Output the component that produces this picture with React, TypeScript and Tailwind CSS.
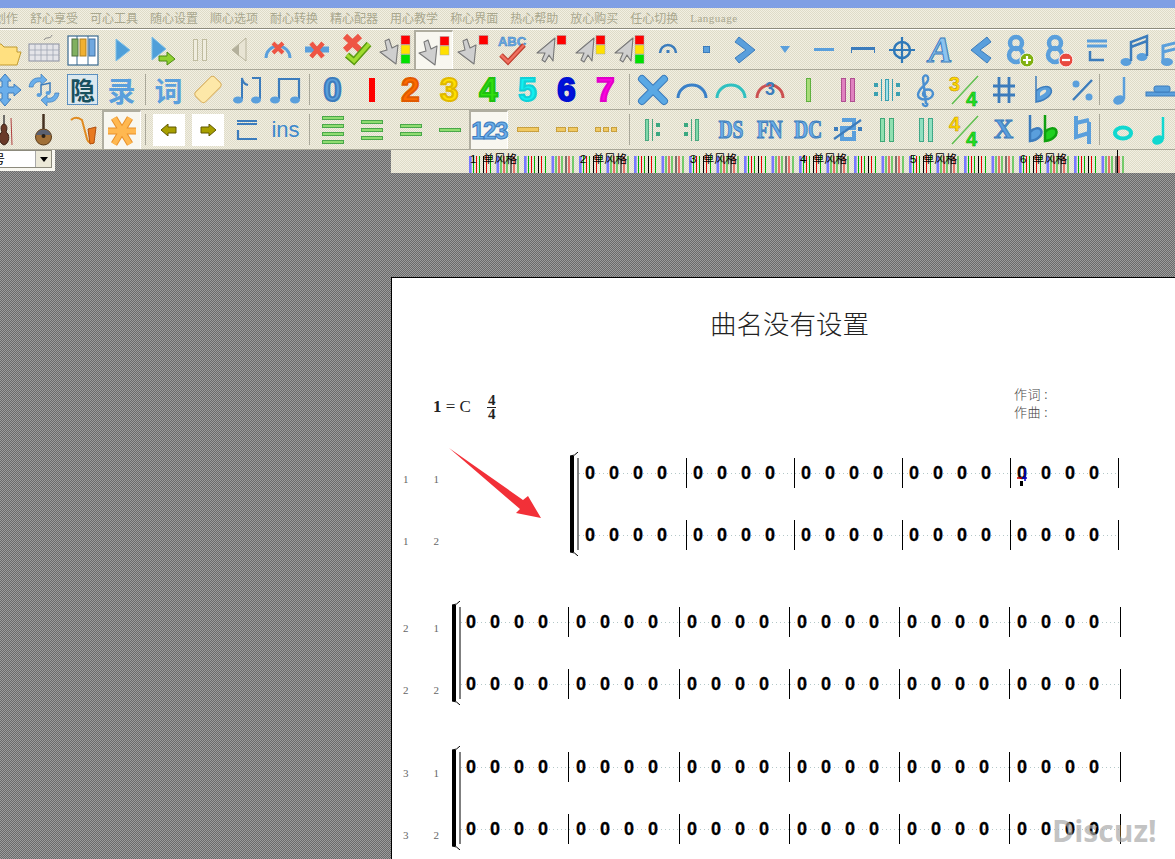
import React from "react";

const BLUE = "#5a9fdc";
const EDGE = "#3c7cbc";

type Item = { icon: React.ReactNode; selected?: boolean } | "sep" | "sepNarrow";

// 36x36 drawing box shared by every toolbar icon
function Ico({ children }: { children: React.ReactNode }) {
  return (
    <svg width="36" height="36" viewBox="0 0 36 36" className="shrink-0">
      {children}
    </svg>
  );
}

function Label({ className, children }: { className: string; children: React.ReactNode }) {
  return <span className={`leading-none whitespace-nowrap ${className}`}>{children}</span>;
}

function Digit({ color, edge, n }: { color: string; edge: string; n: string }) {
  return (
    <span
      className="font-['Liberation_Sans',sans-serif] font-bold text-[33px] leading-none [-webkit-text-stroke:2px_var(--e)]"
      style={{ color, "--e": edge } as React.CSSProperties}
    >
      {n}
    </span>
  );
}

function Cursor({ lights, ne }: { lights: number; ne?: boolean }) {
  const colors = ["#ff0000", "#ffe000", "#00e000"].slice(0, lights);
  return (
    <Ico>
      {ne ? (
        <path d="M22 6 L20 29 L16 23 L12 30 L9 28 L12 21 L4 21 Z" fill="#cfcfcf" stroke="#777" strokeWidth="1.1" strokeLinejoin="round" />
      ) : (
        <path d="M8 9 L12 7 L15 16 L21 13 L19 32 L3 20 L10 18 Z" fill="#cfcfcf" stroke="#777" strokeWidth="1.1" strokeLinejoin="round" />
      )}
      {colors.map((c, i) => (
        <rect key={c} x="24" y={3.5 + i * 9.5} width="9" height="9" fill={c} stroke="#aaa" strokeWidth="0.5" />
      ))}
    </Ico>
  );
}

function GreenBars({ n }: { n: number }) {
  return (
    <div className="flex flex-col gap-[4px]">
      {Array.from({ length: n }).map((_, i) => (
        <div key={i} className="w-[22px] h-[4px] bg-[#8fdc70] border border-[#4aa84a]" />
      ))}
    </div>
  );
}

function YellowDash({ n }: { n: number }) {
  return (
    <div className="flex gap-[2px]">
      {Array.from({ length: n }).map((_, i) => (
        <div key={i} className={`h-[5px] bg-[#f0c860] border border-[#c8a040] ${n === 1 ? "w-[22px]" : n === 2 ? "w-[10px]" : "w-[6px]"}`} />
      ))}
    </div>
  );
}

function Frac({ top, topColor }: { top: string; topColor: string }) {
  return (
    <Ico>
      <line x1="5" y1="32" x2="31" y2="4" stroke="#60c050" strokeWidth="1.5" />
      <text x="2" y="19" fontFamily="Liberation Sans" fontWeight="700" fontSize="20" fill={topColor} stroke="#c09000" strokeWidth="0.5">
        {top}
      </text>
      <text x="19" y="34" fontFamily="Liberation Sans" fontWeight="700" fontSize="20" fill="#20e020" stroke="#10a010" strokeWidth="0.5">
        4
      </text>
    </Ico>
  );
}

function Eight({ badge, mark }: { badge: string; mark: string }) {
  return (
    <Ico>
      <circle cx="15" cy="11" r="6" fill="none" stroke={BLUE} strokeWidth="4.5" />
      <circle cx="15" cy="23" r="7" fill="none" stroke={BLUE} strokeWidth="4.5" />
      <circle cx="26" cy="28" r="7" fill={badge} stroke="#fff" strokeWidth="1" />
      <path d={mark} stroke="#fff" strokeWidth="2.2" />
    </Ico>
  );
}

function Note({ color = BLUE }: { color?: string }) {
  return (
    <Ico>
      <ellipse cx="14" cy="28" rx="6" ry="4.5" fill={color} transform="rotate(-20 14 28)" />
      <path d="M19 27 V5" stroke={color} strokeWidth="2.5" />
    </Ico>
  );
}

function Bars({ color, edge, n }: { color: string; edge: string; n: number }) {
  return (
    <div className="flex gap-[4px]">
      {Array.from({ length: n }).map((_, i) => (
        <div key={i} className="w-[5px] h-[24px] border" style={{ backgroundColor: color, borderColor: edge }} />
      ))}
    </div>
  );
}

function Repeat({ flip }: { flip?: boolean }) {
  return (
    <div className={`flex items-center gap-[3px] ${flip ? "flex-row-reverse" : ""}`}>
      <div className="w-[4px] h-[22px] bg-[#7fd8a8] border border-[#4aa880]" />
      <div className="w-[1px] h-[22px] bg-[#4aa880]" />
      <div className="flex flex-col gap-[5px]">
        <div className="w-[4px] h-[4px] bg-[#3aa880]" />
        <div className="w-[4px] h-[4px] bg-[#3aa880]" />
      </div>
    </div>
  );
}

const serifBlue =
  "font-['Liberation_Serif',serif] font-bold text-[25px] scale-x-[0.78] text-[#6aaeea] [-webkit-text-stroke:1px_#3c7cbc]";
const cjkBlue = "font-['Noto_Sans_CJK_SC',sans-serif] text-[28px] font-bold text-[#5a9fdc]";

const row1: Item[] = [
  { icon: <Ico><path d="M4 12 H14 L17 15 H30 V20 H34 L30 33 H4 Z" fill="#ffe080" stroke="#c09a30" /></Ico> },
  {
    icon: (
      <Ico>
        <path d="M18 8 C20 4 24 8 26 3" fill="none" stroke="#888" />
        <rect x="3" y="12" width="30" height="17" fill="#e4e4e8" stroke="#8a8fa0" />
        <path d="M3 18 H33 M3 23 H33 M9 12 V29 M15 12 V29 M21 12 V29 M27 12 V29" stroke="#a0a4b4" strokeWidth="0.8" />
      </Ico>
    ),
  },
  {
    icon: (
      <Ico>
        <rect x="3" y="4" width="30" height="29" fill="#fff" stroke="#3a6a90" strokeWidth="1.2" />
        <path d="M12 4 V33 M23 4 V33" stroke="#3a6a90" />
        <rect x="7" y="7" width="6" height="17" fill="#80b060" stroke="#507040" />
        <rect x="15" y="7" width="6" height="17" fill="#f0b030" stroke="#b08020" />
        <rect x="24" y="7" width="6" height="17" fill="#70a8e0" stroke="#4070a0" />
      </Ico>
    ),
  },
  { icon: <Ico><path d="M12 7 L26 18 L12 29 Z" fill="#4f9fd9" stroke="#7fc0e8" /></Ico> },
  {
    icon: (
      <Ico>
        <path d="M9 5 L23 17 L9 28 Z" fill="#4f9fd9" stroke="#7fc0e8" />
        <path d="M16 24 H24 V20 L32 27 L24 33 V29 H16 Z" fill="#8fd030" stroke="#4c8a10" />
      </Ico>
    ),
  },
  { icon: <div className="flex gap-[4px]"><div className="w-[5px] h-[22px] border border-[#c0bca0] bg-[#f0eddf]" /><div className="w-[5px] h-[22px] border border-[#c0bca0] bg-[#f0eddf]" /></div> },
  { icon: <Ico><path d="M25 6 V29 L11 18 Z" fill="#e8e4d4" stroke="#b8b49c" /><path d="M18 12 V24 L11 18 Z" fill="#b4b09c" /></Ico> },
  {
    icon: (
      <Ico>
        <path d="M6 26 A12 12 0 0 1 30 26" fill="none" stroke={BLUE} strokeWidth="3" />
        <path d="M13 11 L23 21 M23 11 L13 21" stroke="#ee5544" strokeWidth="4" />
      </Ico>
    ),
  },
  {
    icon: (
      <Ico>
        <rect x="6" y="14.5" width="24" height="6" fill={BLUE} />
        <path d="M12 11 L24 25 M24 11 L12 25" stroke="#ee5544" strokeWidth="4.5" />
      </Ico>
    ),
  },
  {
    icon: (
      <Ico>
        <path d="M7 4 L22 18 M22 4 L7 18" stroke="#ee5544" strokeWidth="6" />
        <path d="M9 23 L16 29 L31 12" fill="none" stroke="#5a9a10" strokeWidth="6.5" />
        <path d="M9 23 L16 29 L31 12" fill="none" stroke="#a0dc30" strokeWidth="3.5" />
      </Ico>
    ),
  },
  { icon: <Cursor lights={3} /> },
  { icon: <Cursor lights={2} />, selected: true },
  { icon: <Cursor lights={1} /> },
  {
    icon: (
      <Ico>
        <text x="18" y="14" textAnchor="middle" fontFamily="Liberation Sans" fontWeight="700" fontSize="13" fill="#6aaeea" stroke={EDGE} strokeWidth="0.5">
          ABC
        </text>
        <path d="M7 23 L14 30 L30 13" fill="none" stroke="#c04030" strokeWidth="5" />
        <path d="M7 23 L14 30 L30 13" fill="none" stroke="#f07060" strokeWidth="2.5" />
      </Ico>
    ),
  },
  { icon: <Cursor lights={1} ne /> },
  { icon: <Cursor lights={2} ne /> },
  { icon: <Cursor lights={3} ne /> },
  {
    icon: (
      <Ico>
        <path d="M10 21 A8 8 0 0 1 26 21" fill="none" stroke={EDGE} strokeWidth="2.5" />
        <rect x="16.5" y="18" width="3" height="3" fill={EDGE} />
      </Ico>
    ),
  },
  { icon: <div className="w-[7px] h-[7px] bg-[#5a9fdc] border border-[#3c7cbc]" /> },
  { icon: <Ico><path d="M11 5 L27 18 L11 31 L7 26 L18 18 L7 10 Z" fill={BLUE} stroke={EDGE} strokeLinejoin="round" /></Ico> },
  { icon: <Ico><path d="M13 14 H23 L18 21 Z" fill={BLUE} /></Ico> },
  { icon: <div className="w-[20px] h-[3px] bg-[#5a9fdc]" /> },
  { icon: <div className="w-[24px] h-[6px] border-t-[3px] border-x border-[#3c7cbc]" /> },
  {
    icon: (
      <Ico>
        <circle cx="18" cy="18" r="8" fill="none" stroke="#2f78b8" strokeWidth="2.5" />
        <path d="M5 18 H31 M18 5 V31" stroke="#2f78b8" strokeWidth="2.2" />
      </Ico>
    ),
  },
  { icon: <Label className="font-['Liberation_Serif',serif] font-bold italic text-[36px] text-[#8cc4f0] [-webkit-text-stroke:1px_#3c7cbc]">A</Label> },
  { icon: <Ico><path d="M25 5 L9 18 L25 31 L29 26 L18 18 L29 10 Z" fill={BLUE} stroke={EDGE} strokeLinejoin="round" /></Ico> },
  { icon: <Eight badge="#80b010" mark="M22 28 H30 M26 24 V32" /> },
  { icon: <Eight badge="#e84a40" mark="M22 28 H30" /> },
  { icon: <Ico><path d="M8 9 H28 M8 14 H28" stroke={BLUE} strokeWidth="3" /><path d="M11 19 V28 H25" fill="none" stroke={EDGE} strokeWidth="2.5" /></Ico> },
  {
    icon: (
      <Ico>
        <ellipse cx="8" cy="30" rx="5.5" ry="4" fill={BLUE} />
        <ellipse cx="24" cy="25" rx="5.5" ry="4" fill={BLUE} />
        <path d="M13 29 V10 L29 4 V24 M13 15 L29 9" fill="none" stroke={EDGE} strokeWidth="2.5" />
      </Ico>
    ),
  },
  { icon: <Ico><path d="M6 30 V14 L30 8 M6 20 L30 14" fill="none" stroke={BLUE} strokeWidth="3" /><ellipse cx="10" cy="30" rx="6" ry="4" fill={BLUE} /></Ico> },
];

const row2: Item[] = [
  { icon: <Ico><path d="M18 2 L24 9 H21 V15 H27 V12 L34 18 L27 24 V21 H21 V27 H24 L18 34 L12 27 H15 V21 H9 V24 L2 18 L9 12 V15 H15 V9 H12 Z" fill="#6aaeea" stroke={EDGE} /></Ico> },
  {
    icon: (
      <Ico>
        <path d="M3 15 C4 8 9 5 15 6 V2 L21 8 L15 13 V10 C11 9 8 11 7 15 Z" fill="#6aaeea" stroke={EDGE} strokeWidth="0.7" />
        <path d="M33 21 C32 28 27 31 21 30 V34 L15 28 L21 23 V26 C25 27 28 25 29 21 Z" fill="#6aaeea" stroke={EDGE} strokeWidth="0.7" />
        <path d="M15 23 V13 L24 11 V21" fill="none" stroke={EDGE} strokeWidth="1.5" />
        <ellipse cx="13" cy="23" rx="2.5" ry="2" fill={BLUE} />
        <ellipse cx="22" cy="21" rx="2.5" ry="2" fill={BLUE} />
      </Ico>
    ),
  },
  {
    icon: (
      <div className="w-[31px] h-[31px] flex items-center justify-center bg-[#dce8ee] border border-[#5a8fc0]">
        <Label className="font-['Noto_Sans_CJK_SC',sans-serif] text-[25px] font-bold text-[#17505e]">隐</Label>
      </div>
    ),
  },
  { icon: <Label className={cjkBlue}>录</Label> },
  "sep",
  { icon: <Label className={cjkBlue}>词</Label> },
  { icon: <div className="w-[28px] h-[15px] rounded-[4px] -rotate-45 bg-[#fde8a8] border border-[#d8b060]" /> },
  {
    icon: (
      <Ico>
        <path d="M13 27 V6 Q14 12 19 13 M31 27 V6 H23" fill="none" stroke={EDGE} strokeWidth="2" />
        <ellipse cx="9" cy="28" rx="5" ry="3.5" fill={BLUE} />
        <ellipse cx="27" cy="28" rx="5" ry="3.5" fill={BLUE} />
      </Ico>
    ),
  },
  {
    icon: (
      <Ico>
        <path d="M11 27 V7 H31 V27" fill="none" stroke={EDGE} strokeWidth="2.2" />
        <ellipse cx="7" cy="28" rx="5" ry="3.5" fill={BLUE} />
        <ellipse cx="27" cy="28" rx="5" ry="3.5" fill={BLUE} />
      </Ico>
    ),
  },
  "sep",
  { icon: <Digit n="0" color="#5a9fdc" edge="#3c7cbc" /> },
  { icon: <div className="w-[6px] h-[24px] bg-[#ff0000]" /> },
  { icon: <Digit n="2" color="#ff6a00" edge="#e05a00" /> },
  { icon: <Digit n="3" color="#ffe000" edge="#e0b800" /> },
  { icon: <Digit n="4" color="#30e010" edge="#20c010" /> },
  { icon: <Digit n="5" color="#10f0f0" edge="#10d0d8" /> },
  { icon: <Digit n="6" color="#0010e0" edge="#0010d0" /> },
  { icon: <Digit n="7" color="#ff00e0" edge="#e000c8" /> },
  "sep",
  { icon: <Ico><path d="M7 7 L29 29 M29 7 L7 29" stroke={EDGE} strokeWidth="8" strokeLinecap="round" /><path d="M7 7 L29 29 M29 7 L7 29" stroke="#5aa8e4" strokeWidth="6" strokeLinecap="round" /></Ico> },
  { icon: <Ico><path d="M4 26 A14 13 0 0 1 32 26" fill="none" stroke="#3a80c8" strokeWidth="3" /></Ico> },
  { icon: <Ico><path d="M4 26 A14 13 0 0 1 32 26" fill="none" stroke="#30c0c0" strokeWidth="3" /></Ico> },
  {
    icon: (
      <Ico>
        <path d="M5 26 A13 13 0 0 1 31 26" fill="none" stroke="#cc5050" strokeWidth="3" />
        <text x="18" y="23" textAnchor="middle" fontFamily="Liberation Sans" fontWeight="700" fontSize="18" fill="#3c7cbc">3</text>
      </Ico>
    ),
  },
  { icon: <Bars n={1} color="#a8dc78" edge="#60b040" /> },
  { icon: <Bars n={2} color="#e080c0" edge="#b05090" /> },
  {
    icon: (
      <div className="flex items-center gap-[3px]">
        <div className="flex flex-col gap-[5px]"><div className="w-[4px] h-[4px] bg-[#3aa0b0]" /><div className="w-[4px] h-[4px] bg-[#3aa0b0]" /></div>
        <div className="w-[1px] h-[22px] bg-[#3aa0b0]" />
        <div className="w-[4px] h-[22px] bg-[#a0e0e8] border border-[#3aa0b0]" />
        <div className="w-[1px] h-[22px] bg-[#3aa0b0]" />
        <div className="flex flex-col gap-[5px]"><div className="w-[4px] h-[4px] bg-[#3aa0b0]" /><div className="w-[4px] h-[4px] bg-[#3aa0b0]" /></div>
      </div>
    ),
  },
  {
    icon: (
      <Ico>
        <path d="M19 31 C21 35 14 35 15 31 M18 32 L15 7 C15 2 21 2 20 8 C19 13 10 16 10 23 C10 29 24 29 25 22 C25 16 15 16 15 22 C15 25 18 25 19 24" fill="none" stroke="#4a8fd0" strokeWidth="2.4" />
      </Ico>
    ),
  },
  { icon: <Frac top="3" topColor="#ffd800" /> },
  { icon: <Ico><path d="M13 5 V31 M23 5 V31 M7 14 H29 M7 23 H29" stroke={EDGE} strokeWidth="2.8" /></Ico> },
  { icon: <Ico><path d="M11 4 V30 C22 28 28 22 26 17 C24 13 16 14 11 19 Z" fill={BLUE} stroke={EDGE} strokeWidth="1.5" /><path d="M15 24 C19 22 22 20 21 18 C19 17 16 19 15 21 Z" fill="#e8e4d4" /></Ico> },
  {
    icon: (
      <Ico>
        <circle cx="12" cy="12" r="3.5" fill={BLUE} />
        <circle cx="25" cy="25" r="3.5" fill={BLUE} />
        <path d="M9 28 L28 8" stroke={EDGE} strokeWidth="2.5" />
      </Ico>
    ),
  },
  "sepNarrow",
  { icon: <Note /> },
  { icon: <Ico><rect x="2" y="20" width="32" height="4" fill={BLUE} stroke={EDGE} /><rect x="10" y="14" width="16" height="6" rx="2" fill={BLUE} stroke={EDGE} /></Ico> },
];

const row3: Item[] = [
  {
    icon: (
      <Ico>
        <path d="M17 3 V13" stroke="#444" strokeWidth="1.5" />
        <path d="M17 12 C13 13 14 18 15 20 C11 22 11 31 17 33 C23 31 23 22 19 20 C20 18 21 13 17 12 Z" fill="#6a3a28" stroke="#3a2014" />
        <path d="M24 6 L25 33" stroke="#b04040" />
      </Ico>
    ),
  },
  {
    icon: (
      <Ico>
        <path d="M17.5 2 V17" stroke="#443020" strokeWidth="2.5" />
        <circle cx="17.5" cy="25" r="8" fill="#a07038" stroke="#5a3a18" />
        <path d="M10 23 A8 8 0 0 1 25 23 Z" fill="#5a6070" />
        <circle cx="17.5" cy="24" r="2" fill="#2a2018" />
      </Ico>
    ),
  },
  {
    icon: (
      <Ico>
        <path d="M6 8 C10 4 14 6 17 8 L22 27 C23 31 27 32 29 30" fill="none" stroke="#e08a20" strokeWidth="2" />
        <path d="M23 17 L31 15 L29 31 L25 32 Z" fill="#e87a20" stroke="#b05010" />
      </Ico>
    ),
  },
  {
    icon: (
      <Ico>
        <path d="M4 18 H32 M10 5 L26 31 M26 5 L10 31" stroke="#e8902a" strokeWidth="7" />
        <path d="M4 18 H32 M10 5 L26 31 M26 5 L10 31" stroke="#ffb850" strokeWidth="5" />
      </Ico>
    ),
    selected: true,
  },
  "sep",
  {
    icon: (
      <div className="w-[32px] h-[32px] bg-white flex items-center justify-center">
        <svg width="16" height="12" viewBox="0 0 16 12"><path d="M0 6 L7 0 V3 H15 V9 H7 V12 Z" fill="#a8a000" stroke="#605800" /></svg>
      </div>
    ),
  },
  {
    icon: (
      <div className="w-[32px] h-[32px] bg-white flex items-center justify-center">
        <svg width="16" height="12" viewBox="0 0 16 12"><path d="M16 6 L9 0 V3 H1 V9 H9 V12 Z" fill="#a8a000" stroke="#605800" /></svg>
      </div>
    ),
  },
  { icon: <Ico><path d="M8 9 H28 M8 12 H28" stroke={EDGE} strokeWidth="2" /><path d="M9 18 V27 H28" fill="none" stroke={EDGE} strokeWidth="2.2" /></Ico> },
  { icon: <Label className="font-['Liberation_Sans',sans-serif] text-[22px] text-[#3c88cc]">ins</Label> },
  "sep",
  { icon: <GreenBars n={4} /> },
  { icon: <GreenBars n={3} /> },
  { icon: <GreenBars n={2} /> },
  { icon: <GreenBars n={1} /> },
  { icon: <Label className="font-['Liberation_Sans',sans-serif] font-bold text-[24px] tracking-[-1.5px] text-[#6aaeea] [-webkit-text-stroke:1px_#3c7cbc]">123</Label>, selected: true },
  { icon: <YellowDash n={1} /> },
  { icon: <YellowDash n={2} /> },
  { icon: <YellowDash n={3} /> },
  "sep",
  { icon: <Repeat /> },
  { icon: <Repeat flip /> },
  { icon: <Label className={serifBlue}>DS</Label> },
  { icon: <Label className={serifBlue}>FN</Label> },
  { icon: <Label className={serifBlue}>DC</Label> },
  {
    icon: (
      <Ico>
        <path d="M12 8 H24 V16 H12 V27 H24 V19" fill="none" stroke={BLUE} strokeWidth="4" />
        <path d="M4 27 L31 8" stroke={EDGE} strokeWidth="2.2" />
        <rect x="4" y="15" width="4" height="4" fill={EDGE} />
        <rect x="28" y="15" width="4" height="4" fill={EDGE} />
      </Ico>
    ),
  },
  { icon: <Bars n={2} color="#90e0b0" edge="#40a878" /> },
  { icon: <Bars n={2} color="#90e0c0" edge="#40a888" /> },
  { icon: <Frac top="4" topColor="#ffd800" /> },
  { icon: <Label className="font-['Liberation_Serif',serif] font-bold text-[27px] text-[#5a9fdc] [-webkit-text-stroke:1px_#3c7cbc]">X</Label> },
  {
    icon: (
      <Ico>
        <path d="M5 3 V29 C14 28 18 22 16 18 C14 15 9 16 5 20" fill={BLUE} stroke={EDGE} strokeWidth="2.5" />
        <path d="M20 3 V29 C29 28 33 22 31 18 C29 15 24 16 20 20" fill="#20d020" stroke="#10a010" strokeWidth="2.5" />
      </Ico>
    ),
  },
  { icon: <Ico><path d="M12 4 V25 L25 21 M12 11 L25 8 M25 10 V32" fill="none" stroke={BLUE} strokeWidth="4" /></Ico> },
  "sepNarrow",
  { icon: <Ico><ellipse cx="18" cy="21" rx="8" ry="5.5" fill="none" stroke="#10d8d0" strokeWidth="4" /></Ico> },
  { icon: <Note color="#10d8d0" /> },
];

const menus = ["舒心享受", "可心工具", "随心设置", "顺心选项", "耐心转换", "精心配器", "用心教学", "称心界面", "热心帮助", "放心购买", "任心切换"];

const dither = "bg-[repeating-conic-gradient(#f2efe2_0_25%,#dedbc8_0_50%)] bg-[length:2px_2px]";

function ToolRow({ items, className }: { items: Item[]; className: string }) {
  return (
    <div className={`flex h-[40px] border-b border-[#a9a798] ${className}`}>
      {items.map((item, i) => {
        if (item === "sep") {
          return <div key={i} className="w-[8px] shrink-0 flex justify-center py-1"><div className="w-px bg-[#aaa89a]" /></div>;
        }
        if (item === "sepNarrow") {
          return <div key={i} className="w-[2px] -ml-[3px] mr-[3px] shrink-0 flex justify-center py-1"><div className="w-px bg-[#aaa89a]" /></div>;
        }
        return (
          <div
            key={i}
            className={`w-[39px] shrink-0 flex items-center justify-center ${
              item.selected ? "bg-[#f8f7f0] border-t-2 border-l-2 border-[#b0aea0] border-r border-r-white" : ""
            }`}
          >
            {item.icon}
          </div>
        );
      })}
    </div>
  );
}

// coloured tick marks under the style labels, a drawing of the timeline
function Ruler() {
  const quarter = 27.5;
  const marks: React.ReactNode[] = [];
  for (let i = 0; i < 24; i++) {
    const x = 78 + i * quarter;
    marks.push(
      <g key={i}>
        <rect x={x} y="6" width="2.6" height="17" fill="#7878ff" />
        <rect x={x + 4} y="6" width="1" height="17" fill="#00b000" />
        <rect x={x + 7} y="6" width="1" height="17" fill="#e80000" />
        <rect x={x + 10} y="6" width="1" height="17" fill="#00b000" />
        <rect x={x + 14} y="6" width="1" height="17" fill="#000" />
        <rect x={x + 17} y="6" width="1" height="17" fill="#e80000" />
        <rect x={x + 21} y="6" width="1" height="17" fill="#00b000" />
      </g>
    );
  }
  return (
    <div className={`relative flex-1 h-[23px] overflow-hidden ${dither}`}>
      <svg width="784" height="23" className="block">
        {marks}
        <rect x="726" y="0" width="1" height="23" fill="#000" />
      </svg>
      {[0, 1, 2, 3, 4, 5].map((i) => (
        <span
          key={i}
          className="absolute top-[2px] text-[11.5px] leading-[14px] text-black whitespace-pre font-['Liberation_Sans','Noto_Sans_CJK_SC',sans-serif]"
          style={{ left: 79 + i * 110 }}
        >
          {i + 1}  单风格
        </span>
      ))}
    </div>
  );
}

function Measure({ width, mark, shift }: { width: number; mark?: boolean; shift: string }) {
  return (
    <div
      className="flex items-center h-[30px] shrink-0 border-r border-black bg-[repeating-linear-gradient(90deg,#b4c8c8_0_1px,transparent_1px_4px)] bg-[length:100%_1px] bg-center bg-no-repeat"
      style={{ width }}
    >
      {[0, 1, 2, 3].map((i) => (
        <span
          key={i}
          className={`relative w-[24px] text-center font-['Liberation_Sans',sans-serif] font-bold text-[18px] leading-none text-black [-webkit-text-stroke:0.3px_#000] ${shift}`}
        >
          0
          {mark && i === 0 && (
            <svg width="12" height="20" viewBox="0 0 12 20" className="absolute left-[6px] top-[2px]">
              <path d="M1 12 H6" stroke="#c00000" strokeWidth="1.5" />
              <path d="M6 12 H11 M9 2 V15" stroke="#0000c0" strokeWidth="1.5" />
              <rect x="4" y="15" width="3" height="5" fill="#000" />
            </svg>
          )}
        </span>
      ))}
    </div>
  );
}

function System({ index, widths, left, className, mark }: { index: number; widths: number[]; left: string; className: string; mark?: boolean }) {
  return (
    <div className={`flex ${className}`}>
      <div className="flex flex-col gap-[32px] pt-[6px] font-['Liberation_Serif',serif] text-[11px] text-[#666] w-[60px] pl-[11px] shrink-0">
        {[1, 2].map((r) => (
          <div key={r} className="flex h-[30px] items-center gap-[25px]">
            <span>{index}</span>
            <span>{r}</span>
          </div>
        ))}
      </div>
      <svg width="10" height="104" viewBox="0 0 10 104" className={`shrink-0 -mt-[6px] ${left}`}>
        <path d="M1 4 H5 V100 H1 Z" fill="#000" />
        <path d="M1 4 Q6 4 9 0 M1 100 Q6 100 9 104" fill="none" stroke="#000" strokeWidth="1" />
        <path d="M9 6 V98" stroke="#000" strokeWidth="1" />
      </svg>
      <div className="flex flex-col gap-[32px]">
        {[0, 1].map((r) => (
          <div key={r} className="flex">
            {widths.map((w, i) => (
              <Measure key={i} width={w} shift={mark ? "-left-px" : i === 0 ? "-left-[2px]" : "left-0"} mark={mark && r === 0 && i === widths.length - 1} />
            ))}
          </div>
        ))}
      </div>
    </div>
  );
}

export default function App() {
  return (
    <div className="w-[1175px] h-[859px] overflow-hidden flex flex-col font-['Liberation_Sans','Noto_Sans_CJK_SC',sans-serif]">
      <div className="h-[8px] bg-[#7f9fe4] shrink-0" />
      <div className={`${dither} shrink-0`}>
        <div className="h-[20px] flex items-center gap-[12px] -ml-[6px] text-[12px] text-[#a9a78e] font-['Noto_Sans_CJK_SC',sans-serif] whitespace-nowrap">
          <span>创作</span>
          {menus.map((m) => (
            <span key={m}>{m}</span>
          ))}
          <span className="font-['Liberation_Serif',serif] text-[11px] tracking-[0.5px]">Language</span>
        </div>
        <div className="h-[2px] bg-[#8c8a7c] border-b border-white" />
        <ToolRow items={row1} className="-ml-[15px]" />
        <ToolRow items={row2} className="-ml-[15px]" />
        <ToolRow items={row3} className="-ml-[15px]" />
      </div>
      <div className="flex-1 min-h-0 bg-[repeating-conic-gradient(#6a6a6a_0_25%,#9c9c9c_0_50%)] bg-[length:2px_2px]">
        <div className="flex h-[23px]">
          <div className="w-[55px] h-[21px] bg-[#f8f7f0] pr-[3px] pb-[3px]">
            <div className="h-full bg-white border-y border-r border-[#8c8a7c] flex justify-between items-center">
              <span className="text-[12px] -ml-[7px] font-['Noto_Sans_CJK_SC',sans-serif] text-black leading-none">号</span>
              <div className="w-[16px] h-full bg-[#ece9d8] border-l border-[#aaa] flex items-center justify-center">
                <div className="border-x-[4px] border-x-transparent border-t-[5px] border-t-black" />
              </div>
            </div>
          </div>
          <div className="w-[336px]" />
          <Ruler />
        </div>
        <div className="relative ml-[391px] mt-[104px] w-[800px] h-[700px] bg-white border-t border-l border-black">
          <h1 className="pt-[26px] pr-[4px] text-center text-[26.5px] leading-[38px] text-[#222] font-['Noto_Sans_CJK_SC',sans-serif] font-light">曲名没有设置</h1>
          <div className="flex justify-between items-start mt-[43px] pl-[41px] pr-[143px]">
            <div className="flex items-center gap-[16px] h-[30px] mt-[7px] font-['Liberation_Serif',serif] text-[17px] text-[#222]">
              <span><b>1</b> = C</span>
              <div className="flex flex-col items-center text-[15px] leading-[13px] font-bold">
                <span className="border-b border-[#222] px-[1px]">4</span>
                <span>4</span>
              </div>
            </div>
            <div className="text-[13px] leading-[18px] tracking-[0.5px] text-[#444] font-['Noto_Sans_CJK_SC',sans-serif] font-light">
              <div>作词 :</div>
              <div>作曲 :</div>
            </div>
          </div>
          <System index={1} widths={[108, 108, 108, 108, 108]} left="ml-[117px]" className="mt-[36px]" mark />
          <System index={2} widths={[108, 111, 110, 110, 110, 111]} left="-ml-[1px]" className="mt-[51px]" />
          <System index={3} widths={[108, 111, 110, 110, 110, 111]} left="-ml-[1px]" className="mt-[47px]" />
          <svg width="100" height="80" viewBox="0 0 100 80" className="absolute left-[56px] top-[169px]">
            <path d="M1 1 L75 53 L80 49 L93 71 L68 66 L72 62 Z" fill="#f23038" />
          </svg>
          <span className="absolute left-[660px] top-[538px] text-[30px] leading-none font-bold text-[#a8a8a8]/70 font-['Open_Sans',sans-serif]">
            Discuz!
          </span>
        </div>
      </div>
    </div>
  );
}
